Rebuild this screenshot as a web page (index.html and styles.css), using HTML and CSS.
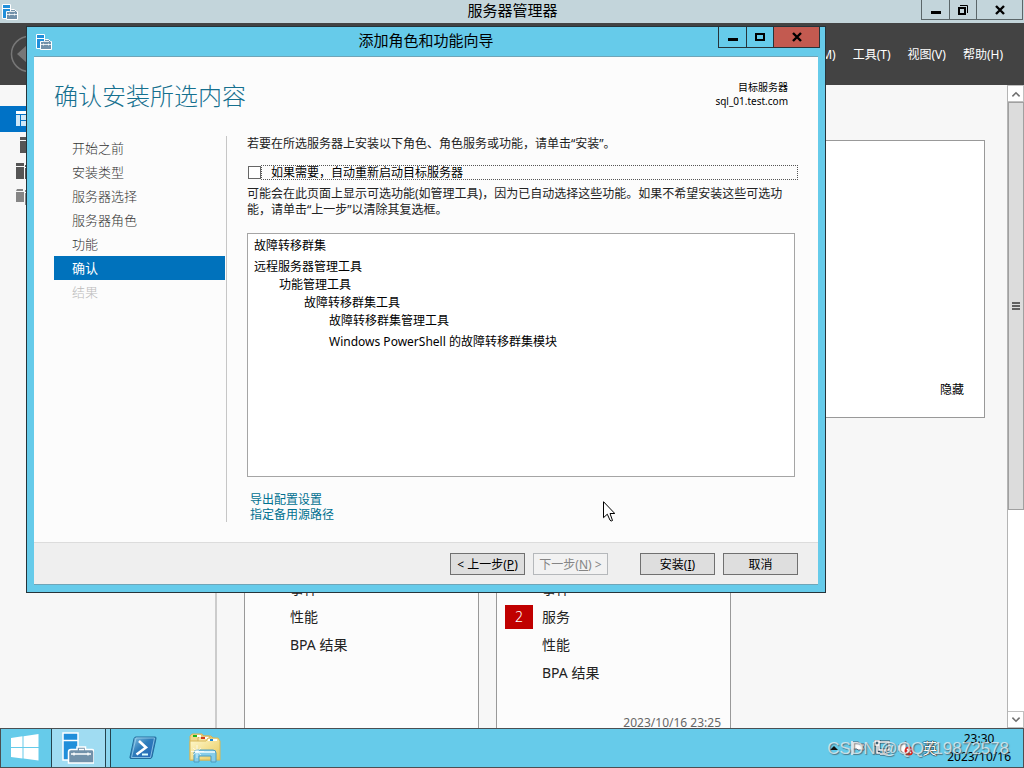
FILE: index.html
```html
<!DOCTYPE html>
<html lang="zh-CN">
<head>
<meta charset="utf-8">
<title>服务器管理器</title>
<link rel="stylesheet" href="styles.css">
</head>
<body>
<svg class="defs" aria-hidden="true">
  <symbol id="server-icon" viewBox="0 0 32 32">
    <path d="M1 1h15v27H1z" fill="#218fda" stroke="#fff" stroke-width="1.500"/>
    <path d="M1 8.500h15" stroke="#fff" stroke-width="1.500"/>
    <path d="M6.500 31V20q0-2.500 2.500-2.500h6V15h8.500v2.500H30q2 0 2 2.500v11z" fill="#7291aa" stroke="#fff" stroke-width="1.500"/>
    <path d="M17 17.500h5M9 22h20M12 20.500v3M26 20.500v3" stroke="#fff" stroke-width="1.300"/>
  </symbol>
  <symbol id="server-icon-small" viewBox="0 0 16 16">
    <path d="M.5.500h8v14h-8z" fill="#218fda" stroke="#fff"/>
    <path d="M1 4.500h7" stroke="#fff"/>
    <path d="M4.500 15.500v-8h3l2-2h3l2 2h1v8z" fill="#7291aa" stroke="#fff"/>
    <path d="M5 10.500h10M7.500 9.500v2M12.500 9.500v2M8 7.500h5" stroke="#fff" stroke-width=".8"/>
  </symbol>
</svg>

<div class="desktop">
  <section class="manager">
    <header class="titlebar">
      <svg class="app-icon"><use href="#server-icon-small"/></svg>
      <h1 class="window-title">服务器管理器</h1>
      <div class="controls">
        <button class="ctl" aria-label="最小化"><svg viewBox="0 0 12 12"><path d="M1 8.500h10" stroke="#000" stroke-width="3"/></svg></button>
        <button class="ctl" aria-label="还原"><svg viewBox="0 0 12 12" fill="none" stroke="#000"><path d="M2 4h6v6H2z" stroke-width="2"/><path d="M3 1.500h7.500V9"/></svg></button>
        <button class="ctl ctl-close" aria-label="关闭"><svg viewBox="0 0 12 12"><path d="M2 2l8 8M10 2l-8 8" stroke="#000" stroke-width="2.400"/></svg></button>
      </div>
    </header>

    <nav class="toolbar">
      <button class="back" aria-label="后退"><svg viewBox="0 0 38 38"><circle cx="19" cy="19" r="17.500" fill="none" stroke="#777" stroke-width="1.500"/><path d="M7 19l10-9v18z" fill="#777"/></svg></button>
      <div class="menus">
        <button class="menu">管理(M)</button>
        <button class="menu">工具(T)</button>
        <button class="menu">视图(V)</button>
        <button class="menu">帮助(H)</button>
      </div>
    </nav>

    <div class="workspace">
      <aside class="sidebar">
        <button class="side-item side-active" aria-label="仪表板"><svg viewBox="0 0 16 16"><path d="M0 0h16v3H0z" fill="#fff"/><path d="M0 4h4v11H0zM5 4h11v5H5zM5 10h11v5H5z" fill="#cfe8f8"/></svg></button>
        <button class="side-item" aria-label="本地服务器"><svg viewBox="0 0 16 16" fill="#555"><path d="M4 0h9v3H4zM4 4h9v12H4z"/></svg></button>
        <button class="side-item" aria-label="所有服务器"><svg viewBox="0 0 16 16" fill="#555"><path d="M0 0h8v3H0zM0 4h8v12H0zM9 2h7v2H9zM9 5h7v11H9z"/></svg></button>
        <button class="side-item" aria-label="文件和存储服务"><svg viewBox="0 0 16 16" fill="#858585"><path d="M1 0h6v2H0zM0 3h8v10H0zM9 1h7v2H9zM9 4h7v12H9z"/></svg></button>
      </aside>

      <main class="content">
        <div class="welcome"><button class="hide">隐藏</button></div>
        <div class="tiles">
          <ul class="tile">
            <li class="tile-row">事件</li>
            <li class="tile-row">性能</li>
            <li class="tile-row">BPA 结果</li>
          </ul>
          <ul class="tile">
            <li class="tile-row">事件</li>
            <li class="tile-row"><span class="count">2</span>服务</li>
            <li class="tile-row">性能</li>
            <li class="tile-row">BPA 结果</li>
            <li class="stamp">2023/10/16 23:25</li>
          </ul>
        </div>
      </main>

      <div class="scrollbar">
        <button class="arrow" aria-label="向上滚动"><svg viewBox="0 0 10 10"><path d="M2 7l3-3 3 3" fill="none" stroke="#707070" stroke-width="1.300"/></svg></button>
        <div class="track"><div class="thumb"><svg viewBox="0 0 8 8"><path d="M0 1h8M0 4h8M0 7h8" stroke="#606060" stroke-width="2"/></svg></div></div>
        <button class="arrow" aria-label="向下滚动"><svg viewBox="0 0 10 10"><path d="M2 3l3 3 3-3" fill="none" stroke="#707070" stroke-width="1.300"/></svg></button>
      </div>
    </div>
  </section>

  <footer class="taskbar">
    <button class="task task-start" aria-label="开始"><svg viewBox="0 0 28 28" fill="#fff"><path d="M0 4l11.500-1.700V13H0zM12.500 2.200L27.500 0v13h-15zM0 14h11.500v10.500L0 23zM12.500 14h15v12.500l-15-2z"/></svg></button>
    <button class="task task-active" aria-label="服务器管理器"><svg><use href="#server-icon"/></svg></button>
    <button class="task task-shell" aria-label="PowerShell"><svg viewBox="0 0 28 24">
      <defs><linearGradient id="ps" x1="0" y1="0" x2="1" y2="1"><stop offset="0" stop-color="#8ec8e6"/><stop offset=".45" stop-color="#2e7dbb"/><stop offset="1" stop-color="#2462b8"/></linearGradient></defs>
      <path d="M7 1h19q1.500 0 1 1.500L23 21q-.500 1.500-2 1.500H2q-1.500 0-1-1.500L5 2.500Q5.500 1 7 1z" fill="url(#ps)" stroke="#226d9c"/>
      <path d="M7 2h18.500L21.500 21.500H2.500z" fill="none" stroke="#9bd2ec" stroke-width=".8"/>
      <path d="M10 5l7 6.500L7.500 18.500" fill="none" stroke="#fff" stroke-width="2.600"/><path d="M13 18.500h6" stroke="#dff" stroke-width="2"/></svg></button>
    <button class="task task-files" aria-label="文件资源管理器"><svg viewBox="0 0 32 30">
      <defs><linearGradient id="fold" x1="0" y1="0" x2="1" y2="1"><stop offset="0" stop-color="#fffad0"/><stop offset="1" stop-color="#e9c95a"/></linearGradient></defs>
      <path d="M1 27V3l2-2h10l2 2h7l2 2v22z" fill="#f2d98b" stroke="#d3b25c"/>
      <path d="M9 7V5l2-2h9l2 3h7v4H9z" fill="#f7e3a5" stroke="#d3b25c"/>
      <path d="M4 2h8v2H4zM12 4h8v2h-8z" fill="#fff"/>
      <path d="M4 2h4v2H4z" fill="#1db31d"/><path d="M12 4h4v2h-4z" fill="#d33c1b"/>
      <path d="M1 27V8h16l2-3h10l2 3v19z" fill="url(#fold)" stroke="#d8b858"/><path d="M19 6h9v2h-9z" fill="#fff"/><path d="M21 6h3v2h-3z" fill="#1686d8"/>
      <path d="M5 29V20q0-3 3-3h16q3 0 3 3v9h-5v-6H10v6z" fill="#86cdea" stroke="#4b9cc0"/><path d="M6 18h20v2H6z" fill="#d5f1fa"/>
      <path d="M8 12v13M2 18.500h13M4 15l8 7M12 15l-8 7" stroke="#fff" stroke-width=".7"/></svg></button>
    <div class="tray">
      <button class="tray-more" aria-label="显示隐藏的图标"><svg viewBox="0 0 8 4"><path d="M0 4l4-4 4 4z" fill="#111"/></svg></button>
      <svg class="tray-icon" viewBox="0 0 16 16"><path d="M2 15V1M2.500 2h6l1 2h5l-1 3 1 3H8L7 9H3" fill="#fff" stroke="#445" stroke-width=".8"/><path d="M2 1v14" stroke="#fff" stroke-width="1.500"/></svg>
      <svg class="tray-icon" viewBox="0 0 16 16"><path d="M5 2h10v8H5zM10 10v4M6 14h8M1 1h4v4H1zM3 5v8h3" fill="none" stroke="#345" stroke-width="3"/><path d="M5 2h10v8H5zM10 10v4M6 14h8M1 1h4v4H1zM3 5v8h3" fill="none" stroke="#fff" stroke-width="1.500"/></svg>
      <svg class="tray-icon" viewBox="0 0 16 16"><path d="M0 5h3l5-4v14l-5-4H0z" fill="#fff" stroke="#456" stroke-width=".6"/><circle cx="11" cy="11" r="4.500" fill="#d9291c"/><path d="M9 9l4 4M13 9l-4 4" stroke="#fff" stroke-width="1.500"/></svg>
      <span class="ime">英</span>
      <div class="clock"><span>23:30</span><span>2023/10/16</span></div>
    </div>
  </footer>

  <section class="wizard" role="dialog" aria-labelledby="wizard-name">
    <header class="titlebar wizard-bar">
      <svg class="app-icon"><use href="#server-icon-small"/></svg>
      <h2 class="window-title" id="wizard-name">添加角色和功能向导</h2>
      <div class="controls">
        <button class="ctl" aria-label="最小化"><svg viewBox="0 0 12 12"><path d="M1 8.500h10" stroke="#000" stroke-width="3"/></svg></button>
        <button class="ctl" aria-label="最大化"><svg viewBox="0 0 12 12"><path d="M2 3h8v6H2z" fill="none" stroke="#000" stroke-width="2"/></svg></button>
        <button class="ctl ctl-close" aria-label="关闭"><svg viewBox="0 0 12 12"><path d="M2 2l8 8M10 2l-8 8" stroke="#000" stroke-width="2.400"/></svg></button>
      </div>
    </header>
    <div class="page">
      <div class="page-head">
        <h3 class="page-title">确认安装所选内容</h3>
        <p class="target"><span class="target-label">目标服务器</span><span>sql_01.test.com</span></p>
      </div>
      <div class="page-body">
        <ol class="steps">
          <li class="step">开始之前</li>
          <li class="step">安装类型</li>
          <li class="step">服务器选择</li>
          <li class="step">服务器角色</li>
          <li class="step">功能</li>
          <li class="step step-current">确认</li>
          <li class="step step-off">结果</li>
        </ol>
        <div class="details">
          <p class="note">若要在所选服务器上安装以下角色、角色服务或功能，请单击“安装”。</p>
          <div class="restart">
            <input class="tick" type="checkbox" id="restart">
            <label class="restart-label" for="restart">如果需要，自动重新启动目标服务器</label>
          </div>
          <p class="note">可能会在此页面上显示可选功能(如管理工具)，因为已自动选择这些功能。如果不希望安装这些可选功能，请单击“上一步”以清除其复选框。</p>
          <ul class="features">
            <li>故障转移群集</li>
            <li class="spaced">远程服务器管理工具
              <ul><li>功能管理工具
                <ul><li>故障转移群集工具
                  <ul>
                    <li>故障转移群集管理工具</li>
                    <li class="spaced">Windows PowerShell 的故障转移群集模块</li>
                  </ul></li></ul></li></ul></li>
          </ul>
          <div class="links">
            <a href="#export">导出配置设置</a>
            <a href="#source">指定备用源路径</a>
          </div>
        </div>
      </div>
      <div class="actions">
        <div class="pair">
          <button class="btn">&lt; 上一步(<u>P</u>)</button>
          <button class="btn" disabled>下一步(<u>N</u>) &gt;</button>
        </div>
        <div class="pair">
          <button class="btn">安装(<u>I</u>)</button>
          <button class="btn">取消</button>
        </div>
      </div>
    </div>
  </section>

  <svg class="cursor" viewBox="0 0 12 21"><path d="M.5.700v16l3.800-3.500 2.700 6q1 1.500 2.500.300L7 12.500h4.800z" fill="#fff" stroke="#000"/></svg>
  <p class="watermark">CSDN @QQ719872578</p>
</div>
</body>
</html>
```
FILE: styles.css
```css
* { box-sizing: border-box; }

body, h1, h2, h3, p, ul, ol { margin: 0; padding: 0; }
ul, ol { list-style: none; }

body {
  font: 12px/16px "Noto Sans", "Noto Sans CJK SC", sans-serif;
  color: #000;
}

button {
  margin: 0;
  padding: 0;
  border: 0;
  background: none;
  color: inherit;
  font: inherit;
}

.defs { position: absolute; width: 0; height: 0; }

.desktop {
  position: relative;
  display: flex;
  flex-direction: column;
  height: 100vh;
  overflow: hidden;
}

.manager {
  display: flex;
  flex: 1;
  flex-direction: column;
  min-height: 0;
}

/* Window title bars */
.titlebar {
  display: grid;
  grid-template-columns: 1fr auto 1fr;
  align-items: center;
  height: 23px;
  padding: 0 1px 0 2px;
  background: #c3d5db;
}
.app-icon { width: 16px; height: 16px; }
.window-title { font-size: 15px; font-weight: 400; line-height: 21px; padding-bottom: 2px; }
.controls {
  display: flex;
  align-self: start;
  justify-self: end;
  border: 1px solid #5b6669;
  border-top: 0;
}
.ctl {
  display: grid;
  place-items: center;
  width: 27px;
  height: 19px;
}
.ctl + .ctl { border-left: 1px solid #5b6669; }
.ctl svg { width: 12px; height: 12px; }
.controls .ctl-close { width: 46px; }

/* Dark toolbar */
.toolbar {
  display: flex;
  align-items: center;
  justify-content: space-between;
  height: 62px;
  padding: 0 21px 0 10px;
  background: #434343;
  color: #fff;
}
.back, .back svg { display: block; width: 38px; height: 38px; }
.menus { display: flex; gap: 17px; padding-top: 2px; }

.workspace {
  display: flex;
  flex: 1;
  min-height: 0;
  background: #f7f7f7;
}
.sidebar {
  width: 217px;
  padding-top: 21px;
  border-right: 2px solid #ccc;
}
.side-item {
  display: flex;
  align-items: center;
  width: 100%;
  height: 26px;
  padding-left: 16px;
}
.side-item svg { width: 16px; height: 16px; }
.side-active { background: #0072c6; }

.content {
  flex: 1;
  min-width: 0;
  padding: 55px 22px 0 27px;
  overflow: hidden;
}
.welcome {
  display: flex;
  align-items: flex-end;
  justify-content: flex-end;
  height: 278px;
  padding: 19px 20px;
  border: 1px solid #999;
  background: #fff;
}
.tiles { display: flex; gap: 17px; margin-top: 76px; }
.tile {
  width: 235px;
  height: 320px;
  padding: 80px 9px 0 8px;
  border: 1px solid #999;
  background: #fcfcfc;
  color: #222;
  font-size: 14px;
}
.tile-row {
  display: flex;
  align-items: center;
  height: 28px;
  padding-left: 37px;
}
.count {
  width: 28px;
  margin: 0 9px 0 -37px;
  background: #c00000;
  color: #fff;
  font-weight: 300;
  line-height: 24px;
  text-align: center;
}
.stamp {
  margin-top: 28px;
  color: #666;
  font-size: 12px;
  text-align: right;
}

.scrollbar {
  display: flex;
  flex-direction: column;
  width: 17px;
  border-left: 1px solid #b4b4b4;
  background: #fff;
}
.arrow {
  display: grid;
  place-items: center;
  height: 17px;
  border: 1px solid #c0c0c0;
  border-left: 0;
}
.arrow svg { width: 12px; height: 12px; }
.track { flex: 1; }
.thumb {
  display: grid;
  place-items: center;
  height: 67%;
  border: 1px solid #a0a0a0;
  background: #dcdcdc;
}
.thumb svg { width: 8px; height: 8px; }

/* Taskbar */
.taskbar {
  display: flex;
  height: 40px;
  border: 1px solid #4b4f52;
  background: #66cbea;
}
.task { display: grid; place-items: center; width: 60px; }
.task-start { width: 50px; padding-right: 2px; }
.task-start svg { width: 28px; height: 28px; }
.task-active {
  padding-right: 6px;
  border: solid #24434e;
  border-width: 0 1px;
  background: linear-gradient(90deg, #a0dcf2 53px, #24434e 53px 54px, #8cd5ee 54px);
}
.task-active svg { width: 32px; height: 32px; }
.task-shell { width: 64px; }
.task-shell svg { width: 28px; height: 24px; }
.task-files svg { width: 32px; height: 30px; }
.tray {
  display: flex;
  align-items: center;
  gap: 8px;
  margin-left: auto;
  padding-right: 12px;
}
.tray-more { display: grid; margin-right: 4px; }
.tray-more svg { width: 8px; height: 4px; }
.tray-icon { width: 16px; height: 16px; }
.ime {
  margin-right: 2px;
  color: #fff;
  font-size: 15px;
  text-shadow: 0 0 1px #000, 0 0 1px #000, 0 0 1px #000;
}
.clock {
  display: flex;
  flex-direction: column;
  align-items: center;
  line-height: 18px;
}

/* Wizard window */
.wizard {
  position: absolute;
  top: 26px;
  left: 26px;
  width: 78.125vw;
  border: 1px solid #26343a;
  background: #66cbea;
}
.wizard-bar {
  height: 29px;
  padding: 0 5px 0 9px;
  background: none;
}
.wizard-bar .window-title { padding-right: 4px; }
.wizard-bar .controls { border-color: #26343a; }
.wizard-bar .ctl { height: 20px; border-color: #26343a; }
.wizard-bar .ctl-close { background: #c35a50; }
.page {
  margin: 0 7px 7px;
  border: solid #6fa5b8;
  border-width: 1px 0;
  background: #fcfcfc;
}
.page-head {
  display: flex;
  align-items: flex-start;
  justify-content: space-between;
  padding: 22px 30px 0 20px;
}
.page-title {
  color: #16708f;
  font-size: 24px;
  font-weight: 300;
  line-height: 34px;
}
.target {
  display: flex;
  flex-direction: column;
  align-items: flex-end;
  font-size: 10px;
  line-height: 12px;
}
.target-label { line-height: 16px; }
.page-body {
  display: flex;
  gap: 20px;
  padding: 23px 20px 20px;
}
.steps {
  width: 173px;
  padding-right: 1px;
  border-right: 1px solid #c6c6c6;
  color: #333;
  font-size: 13px;
  font-weight: 300;
  line-height: 24px;
}
.step { padding-left: 18px; }
.step-current { background: #0072bc; color: #fff; font-weight: 400; }
.step-off { color: #bbb; }
.details { flex: 1; min-width: 0; }
.note { padding-right: 12px; color: #222; }
.restart {
  display: flex;
  align-items: center;
  margin: 13px 0 6px;
}
.tick {
  appearance: none;
  width: 13px;
  height: 13px;
  margin: 0 0 0 1px;
  border: 1px solid #666;
  background: #fff;
}
.restart-label {
  flex: 1;
  padding-left: 9px;
  border: 1px dotted #555;
  line-height: 13px;
}
.features {
  min-height: 244px;
  margin: 15px 3px 0 0;
  padding: 3px 6px;
  border: 1px solid #a5a5a5;
  background: #fff;
  line-height: 18px;
}
.features ul { padding-left: 25px; }
.spaced { padding-top: 3px; }
.links {
  display: flex;
  flex-direction: column;
  align-items: flex-start;
  padding: 15px 3px 0;
  line-height: 15px;
}
.links a { color: #007090; text-decoration: none; }
.actions {
  display: flex;
  justify-content: flex-end;
  gap: 32px;
  padding: 10px 20px 9px;
  border-top: 1px solid #dcdcdc;
  background: #efefef;
}
.pair { display: flex; gap: 8px; }
.btn {
  width: 75px;
  height: 22px;
  padding-top: 2px;
  border: 1px solid #707070;
  background: #dedede;
  white-space: nowrap;
}
.btn:disabled { border-color: #b5b8bb; background: #f2f2f2; color: #858585; }

.cursor {
  position: absolute;
  top: 501px;
  left: 603px;
  width: 12px;
  height: 21px;
}
.watermark {
  position: absolute;
  right: 15px;
  bottom: 9px;
  color: rgba(235, 240, 242, .75);
  font: 17px/20px "Liberation Sans", sans-serif;
  text-shadow: 1px 1px 1px rgba(70, 80, 85, .7);
}
```
